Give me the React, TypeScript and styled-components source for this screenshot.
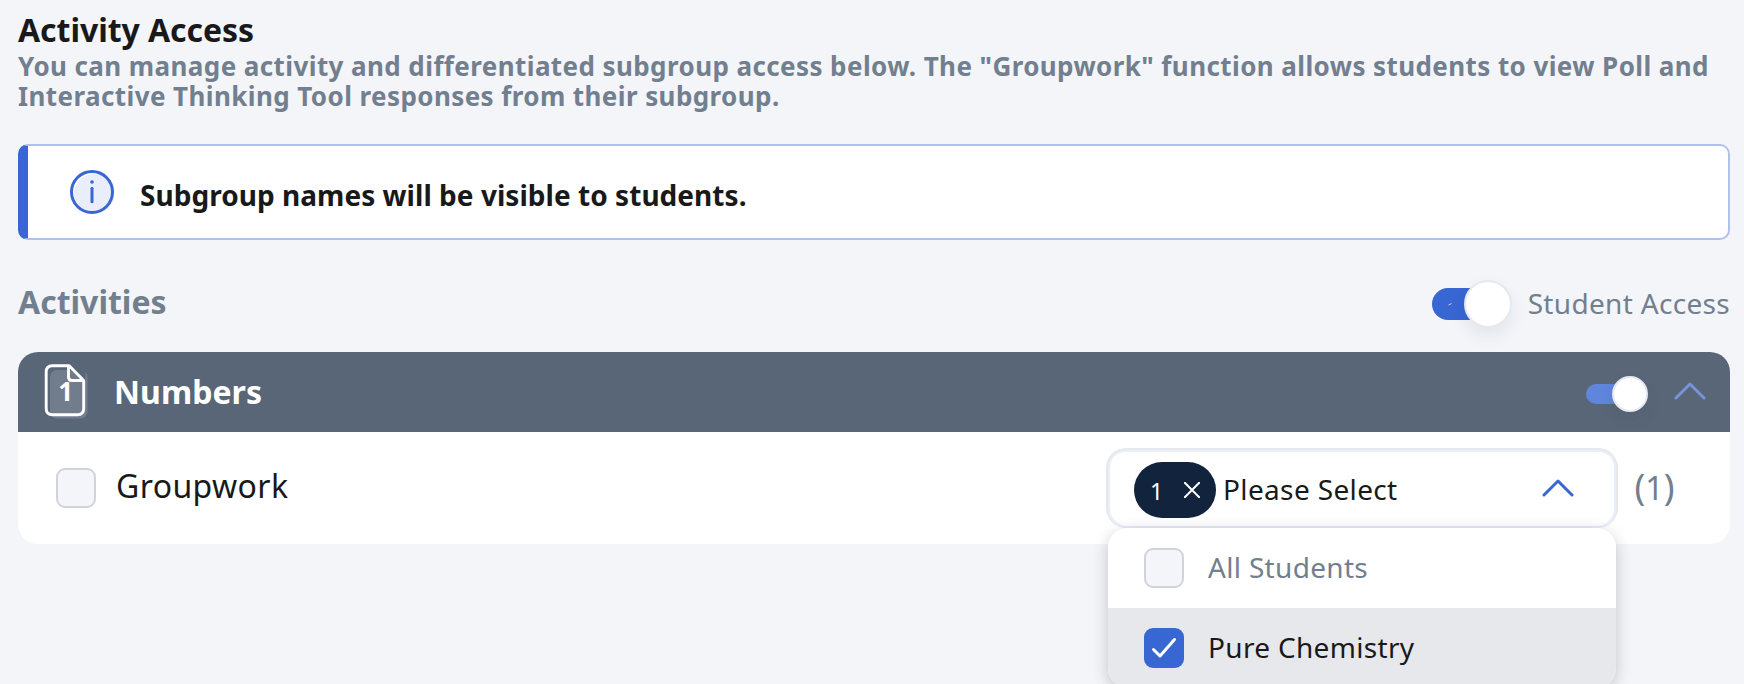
import React from "react";
import styled, { createGlobalStyle } from "styled-components";

const GlobalStyle = createGlobalStyle`
  *, *::before, *::after { box-sizing: border-box; }
  html, body { margin: 0; height: 684px; overflow: hidden; background: #f3f5f9; }
  body { font-family: "Noto Sans", "Open Sans", sans-serif; color: #191919; }
`;

const Page = styled.main`
  padding: 8px 14px 0 18px;
`;

const Title = styled.h1`
  margin: 0;
  font-size: 32px;
  line-height: 43px;
  font-weight: 700;
  letter-spacing: -0.05px;
`;

const Intro = styled.p`
  margin: 0 0 33px;
  font-size: 26px;
  line-height: 30px;
  font-weight: 700;
  letter-spacing: 0.41px;
  color: #727f8e;
`;

const Banner = styled.section`
  display: flex;
  align-items: center;
  height: 96px;
  padding-left: 40px;
  background: #fff;
  border: 2px solid #afc1ef;
  border-left: 10px solid #3866d3;
  border-radius: 10px;
`;

const BannerText = styled.p`
  margin: 5px 0 0 26px;
  font-size: 28px;
  line-height: 40px;
  font-weight: 700;
  letter-spacing: 0.04px;
`;

const SectionBar = styled.div`
  display: flex;
  justify-content: space-between;
  height: 112px;
  padding-top: 38px;
`;

const SectionTitle = styled.h2`
  margin: 0;
  font-size: 32px;
  line-height: 48px;
  font-weight: 700;
  color: #727f8e;
`;

const AccessControl = styled.label`
  display: flex;
  height: 52px;
  align-items: center;
  font-size: 28px;
  letter-spacing: 0.32px;
  color: #727f8e;
`;

const AccessLabel = styled.span`
  margin: -2px 0 0 16px;
`;

const Switch = styled.span<{ $large?: boolean }>`
  display: flex;
  align-items: center;
  justify-content: flex-end;
  width: ${(p) => (p.$large ? "80px" : "62px")};
  height: ${(p) => (p.$large ? "32px" : "20px")};
  border-radius: 16px;
  background: ${(p) =>
    p.$large
      ? "linear-gradient(90deg, #3866d3 56px, transparent 56px)"
      : "linear-gradient(90deg, #5f85dd 44px, transparent 44px)"};
`;

const Knob = styled.span<{ $large?: boolean }>`
  flex: none;
  width: ${(p) => (p.$large ? "48px" : "36px")};
  height: ${(p) => (p.$large ? "48px" : "36px")};
  margin: ${(p) => (p.$large ? "-1px 0 0" : "0")};
  border: 2px solid #e6e8ed;
  border-radius: 50%;
  background: #fff;
  box-shadow: 0 8px 16px rgba(30, 50, 70, 0.08);
`;

const Card = styled.section`
  border-radius: 20px;
  background: #fff;
`;

const CardHeader = styled.header`
  display: flex;
  align-items: center;
  height: 80px;
  padding: 0 24px 0 24px;
  border-radius: 20px 20px 0 0;
  background: #596677;
  color: #fff;
`;

const CardTitle = styled.h3`
  flex: 1;
  margin: 0 0 0 26px;
  font-size: 32px;
  line-height: 44px;
  font-weight: 700;
  letter-spacing: 0.05px;
`;

const HeaderActions = styled.div`
  display: flex;
  align-items: center;
  gap: 26px;
  padding-top: 3px;

  & > svg {
    margin-top: -5px;
  }
`;

const CardRow = styled.div`
  display: flex;
  align-items: center;
  height: 112px;
  padding: 0 56px 0 38px;
`;

const Check = styled.span<{ $on?: boolean }>`
  display: flex;
  align-items: center;
  justify-content: center;
  flex: none;
  width: 40px;
  height: 40px;
  border: 2px solid ${(p) => (p.$on ? "#3866d3" : "#d0d4d9")};
  border-radius: 9px;
  background: ${(p) => (p.$on ? "#3866d3" : "#f3f5f9")};
`;

const RowLabel = styled.span`
  flex: 1;
  margin: -5px 0 0 20px;
  font-size: 32px;
  line-height: 44px;
  letter-spacing: 0.4px;
`;

const SelectWrap = styled.div`
  position: relative;
  width: 512px;
`;

const SelectBox = styled.div`
  display: flex;
  align-items: center;
  height: 80px;
  padding: 0 42px 0 26px;
  border: 2px solid #e6e8ed;
  border-bottom-color: #e7ecf8;
  border-radius: 20px;
  background: #fff;
  box-shadow: inset 2px 0 #e9eefb, inset -2px 0 #e9eefb, inset 0 2px #e9eefb;
`;

const Pill = styled.span`
  display: flex;
  align-items: center;
  gap: 21px;
  width: 82px;
  height: 56px;
  margin-top: 4px;
  padding-left: 16px;
  border-radius: 28px;
  background: #12233d;
  color: #fff;
  font-size: 23px;
  line-height: 32px;
`;

const PillText = styled.span`
  width: 13px;
  margin-top: 2px;
`;

const Placeholder = styled.span`
  flex: 1;
  margin: 2px 0 0 7px;
  font-size: 28px;
  line-height: 40px;
  letter-spacing: 0.36px;
`;

const Menu = styled.ul`
  position: absolute;
  top: 80px;
  left: 2px;
  width: 508px;
  margin: 0;
  padding: 0;
  list-style: none;
  overflow: hidden;
  border-radius: 20px;
  background: #fff;
  box-shadow: 0 4px 16px rgba(0, 0, 0, 0.2);
`;

const Option = styled.li<{ $active?: boolean }>`
  display: flex;
  align-items: center;
  gap: 24px;
  height: 80px;
  padding-left: 36px;
  font-size: 28px;
  line-height: 40px;
  letter-spacing: 0.32px;
  color: ${(p) => (p.$active ? "#191919" : "#727f8e")};
  background: ${(p) => (p.$active ? "#e7e8ec" : "#fff")};
`;

const OptionText = styled.span`
  margin-top: -2px;
`;

const Count = styled.span`
  display: flex;
  align-items: baseline;
  width: 56px;
  margin-top: -2px;
  padding-left: 16.5px;
  font-size: 32px;
  line-height: 44px;
  color: #727f8e;
`;

const Paren = styled.span`
  font-size: 36px;
`;

const InfoIcon = () => (
  <svg width="46" height="46" viewBox="0 0 46 46" fill="none">
    <circle cx="26" cy="25" r="20" fill="#e9eefa" />
    <circle cx="24" cy="23" r="20.5" stroke="#3866d3" strokeWidth="3" />
    <circle cx="24" cy="13" r="1.8" fill="#3866d3" />
    <path d="M24 19.2V32.8" stroke="#3866d3" strokeWidth="3" strokeLinecap="round" />
  </svg>
);

const PageIcon = () => (
  <svg width="46" height="56" viewBox="0 0 46 56" fill="none">
    <rect x="8" y="6" width="37.5" height="48.5" rx="7" fill="#717c8c" />
    <path d="M26.5 1.5 43.5 17.5V0H26.5Z" fill="#596677" />
    <path
      d="M26.5 1.800H10.500Q4.200 1.800 4.200 8V44.500Q4.200 50.700 10.500 50.700H35.500Q41.700 50.700 41.700 44.500V16.500L27.200 1.800H26.500V13Q26.500 16.500 30 16.500H41.600"
      stroke="#fff"
      strokeWidth="2.9"
      strokeLinejoin="round"
    />
    <text x="16.3" y="37" fill="#fff" fontSize="26" fontWeight="700">1</text>
  </svg>
);

const Chevron = ({ color }: { color: string }) => (
  <svg width="32" height="18" viewBox="0 0 32 18" fill="none">
    <path d="M2 16 16 2 30 16" stroke={color} strokeWidth="3" strokeLinecap="round" strokeLinejoin="round" />
  </svg>
);

const CloseIcon = () => (
  <svg width="16" height="16" viewBox="0 0 16 16" fill="none">
    <path d="M.8.8 15.200 15.200M15.200.8.8 15.200" stroke="#fff" strokeWidth="2" strokeLinecap="round" />
  </svg>
);

const TickIcon = () => (
  <svg width="26" height="22" viewBox="0 0 26 22" fill="none">
    <path d="M2.500 12.500 9 19 23.500 2.500" stroke="#fff" strokeWidth="3" strokeLinecap="round" strokeLinejoin="round" />
  </svg>
);

const SwitchMark = () => (
  <svg width="16" height="4" viewBox="0 0 16 4">
    <path d="M.5 3 3.500 1.500" stroke="#c5d2f2" strokeWidth="1" />
  </svg>
);

export default function App() {
  return (
    <>
      <GlobalStyle />
      <Page>
        <Title>Activity Access</Title>
        <Intro>
          You can manage activity and differentiated subgroup access below. The "Groupwork" function
          allows students to view Poll and Interactive Thinking Tool responses from their subgroup.
        </Intro>
        <Banner>
          <InfoIcon />
          <BannerText>Subgroup names will be visible to students.</BannerText>
        </Banner>
        <SectionBar>
          <SectionTitle>Activities</SectionTitle>
          <AccessControl>
            <Switch $large>
              <SwitchMark />
              <Knob $large />
            </Switch>
            <AccessLabel>Student Access</AccessLabel>
          </AccessControl>
        </SectionBar>
        <Card>
          <CardHeader>
            <PageIcon />
            <CardTitle>Numbers</CardTitle>
            <HeaderActions>
              <Switch>
                <Knob />
              </Switch>
              <Chevron color="#7894d8" />
            </HeaderActions>
          </CardHeader>
          <CardRow>
            <Check />
            <RowLabel>Groupwork</RowLabel>
            <SelectWrap>
              <SelectBox>
                <Pill>
                  <PillText>1</PillText>
                  <CloseIcon />
                </Pill>
                <Placeholder>Please Select</Placeholder>
                <Chevron color="#3866d3" />
              </SelectBox>
              <Menu>
                <Option>
                  <Check />
                  <OptionText>All Students</OptionText>
                </Option>
                <Option $active>
                  <Check $on>
                    <TickIcon />
                  </Check>
                  <OptionText>Pure Chemistry</OptionText>
                </Option>
              </Menu>
            </SelectWrap>
            <Count>
              <Paren>(</Paren>1<Paren>)</Paren>
            </Count>
          </CardRow>
        </Card>
      </Page>
    </>
  );
}
